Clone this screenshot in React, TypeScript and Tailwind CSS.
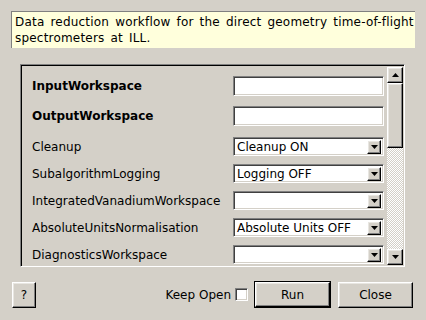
const raised =
  "border border-t-white border-l-white border-r-black border-b-black shadow-[inset_-1px_-1px_0_#808080,inset_1px_1px_0_#e8e6e1] bg-[#d4d0c8]";
const sunken =
  "border border-t-[#808080] border-l-[#808080] border-r-white border-b-white shadow-[inset_1px_1px_0_#404040,inset_-1px_-1px_0_#d4d0c8]";

function DownTriangle() {
  return (
    <svg width="7" height="4" viewBox="0 0 7 4">
      <path d="M0 0h7L3.5 4z" fill="#000" />
    </svg>
  );
}

function UpTriangle() {
  return (
    <svg width="7" height="4" viewBox="0 0 7 4">
      <path d="M0 4h7L3.5 0z" fill="#000" />
    </svg>
  );
}

function LineEdit() {
  return <div className={`w-[151px] h-[20px] bg-white ${sunken}`} />;
}

function Combo({ value }: { value: string }) {
  return (
    <div
      className={`w-[151px] h-[19px] bg-white flex items-center justify-between pl-[3px] pr-[2px] ${sunken}`}
    >
      <span className="leading-none">{value}</span>
      <div className={`w-[14px] h-[14px] flex items-center justify-center ${raised}`}>
        <DownTriangle />
      </div>
    </div>
  );
}

interface row {
  label: string;
  bold?: boolean;
  kind: "edit" | "combo";
  value?: string;
}

const rows: row[] = [
  { label: "InputWorkspace", bold: true, kind: "edit" },
  { label: "OutputWorkspace", bold: true, kind: "edit" },
  { label: "Cleanup", kind: "combo", value: "Cleanup ON" },
  { label: "SubalgorithmLogging", kind: "combo", value: "Logging OFF" },
  { label: "IntegratedVanadiumWorkspace", kind: "combo", value: "" },
  { label: "AbsoluteUnitsNormalisation", kind: "combo", value: "Absolute Units OFF" },
  { label: "DiagnosticsWorkspace", kind: "combo", value: "" },
];

export default function App() {
  return (
    <div
      className="w-[426px] h-[320px] bg-[#d4d0c8] text-[12px] text-black flex flex-col overflow-hidden"
      style={{ fontFamily: '"DejaVu Sans", sans-serif' }}
    >
      <div className="mx-[11px] mt-[11px] h-[37px] bg-[#ffffdc] border-t border-l border-[#808080] px-[3px] pt-[2px] leading-[16px] tracking-[0.2px] [word-spacing:2px] whitespace-nowrap overflow-hidden">
        Data reduction workflow for the direct geometry time-of-flight
        <br />
        spectrometers at ILL.
      </div>

      <div className="ml-[20px] mr-[21px] mt-[16px] h-[203px] flex border border-t-[#808080] border-l-[#808080] border-r-white border-b-white">
        <div className="flex-1 flex border-t border-l border-black overflow-hidden">
          <div className="flex-1 flex flex-col pl-[10px] pr-[3px] pt-[5px] overflow-hidden">
            {rows.map((r, i) => (
              <div
                key={r.label}
                className={`flex items-center justify-between shrink-0 ${
                  r.kind === "edit" ? "h-[30px]" : "h-[27px]"
                } ${i === 2 ? "mt-[2px]" : ""}`}
              >
                <span className={r.bold ? "font-bold" : ""}>{r.label}</span>
                {r.kind === "edit" ? <LineEdit /> : <Combo value={r.value ?? ""} />}
              </div>
            ))}
          </div>
          <div className="w-[16px] flex flex-col mr-[1px] my-[1px]">
            <div className={`h-[16px] flex items-center justify-center ${raised}`}>
              <UpTriangle />
            </div>
            <div className={`h-[65px] ${raised}`} />
            <div className="flex-1 bg-[repeating-conic-gradient(#ffffff_0%_25%,#d4d0c8_0%_50%)] bg-[length:2px_2px]" />
            <div className={`h-[16px] flex items-center justify-center ${raised}`}>
              <DownTriangle />
            </div>
          </div>
        </div>
      </div>

      <div className="flex items-center mt-[14px] pl-[12px] pr-[13px]">
        <div className={`w-[24px] h-[26px] flex items-center justify-center ${raised}`}>?</div>
        <div className="flex-1" />
        <span>Keep Open</span>
        <div className={`w-[13px] h-[13px] bg-white ml-[4px] ${sunken}`} />
        <div className="ml-[6px] border border-black">
          <div className={`w-[75px] h-[25px] flex items-center justify-center ${raised}`}>Run</div>
        </div>
        <div className={`ml-[7px] w-[75px] h-[26px] flex items-center justify-center ${raised}`}>
          Close
        </div>
      </div>
    </div>
  );
}
